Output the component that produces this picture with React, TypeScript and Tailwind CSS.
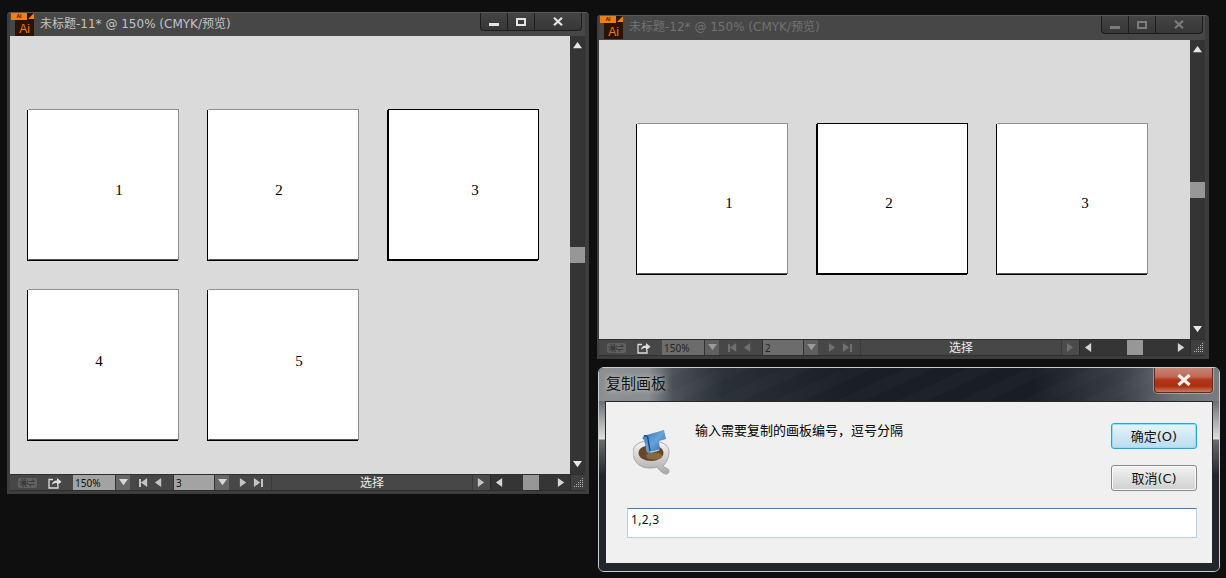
const uiFont = "font-['DejaVu_Sans','Noto_Sans_CJK_SC',sans-serif]";

function Tri({ dir, className }: { dir: "up" | "down" | "left" | "right"; className?: string }) {
  const pts = {
    up: "0,8 5,1 10,8",
    down: "0,1 10,1 5,8",
    left: "8,0 8,10 1,5",
    right: "1,0 1,10 8,5",
  }[dir];
  return (
    <svg viewBox="0 0 10 10" className={`h-[9px] w-[9px] shrink-0 ${className ?? ""}`}>
      <polygon points={pts} fill="currentColor" />
    </svg>
  );
}

function AiIcon() {
  return (
    <div className="relative h-[23px] w-[19px] shrink-0 bg-[#2b1300] font-['Liberation_Sans',sans-serif]">
      <div className="absolute -left-1 top-0 flex h-[7px] w-4 items-center justify-center bg-[#f47e0e] text-[5px] font-bold leading-none text-[#3a1a00]">
        AI
      </div>
      <div className="absolute right-0 top-0 h-0 w-0 border-b-[6px] border-l-[6px] border-b-[#f47e0e] border-l-transparent" />
      <div className="absolute inset-x-0 bottom-[1px] text-center text-[12px] font-medium leading-none text-[#f47e0e]">
        Ai
      </div>
    </div>
  );
}

function WinButtons({ active }: { active: boolean }) {
  const ink = active ? "text-[#e4e4e4]" : "text-[#7c7c7c]";
  return (
    <div className={`flex h-[18px] overflow-hidden rounded-b-[4px] border border-t-0 border-[#1d1d1d] bg-gradient-to-b from-[#444444] to-[#373737] ${ink}`}>
      <div className="flex w-[27px] items-end justify-center border-r border-[#1d1d1d] pb-[4px]">
        <div className="h-[3px] w-[10px] bg-current" />
      </div>
      <div className="flex w-[27px] items-center justify-center border-r border-[#1d1d1d]">
        <div className="h-[8px] w-[10px] border-2 border-current" />
      </div>
      <div className="flex w-[46px] items-center justify-center">
        <svg viewBox="0 0 10 9" className="h-[9px] w-[10px]">
          <path d="M1 0.8 9 8.2M9 0.8 1 8.2" stroke="currentColor" strokeWidth="2.2" />
        </svg>
      </div>
    </div>
  );
}

function Board({ label, heavy, className }: { label: string; heavy?: boolean; className: string }) {
  return (
    <div
      className={`flex h-[151px] w-[151px] items-center justify-center border bg-white font-['Liberation_Serif',serif] text-[15px] text-black shadow-[-1px_1px_0_#000] ${
        heavy ? "border-black" : "border-t-[#8f8f8f] border-r-[#8f8f8f] border-b-[#555] border-l-white"
      } ${className}`}
    >
      {label}
    </div>
  );
}

function StatusBar({ page, active }: { page: string; active: boolean }) {
  const fieldBg = active ? "bg-[#a3a3a3] text-[#111]" : "bg-[#6c6c6c] text-[#262626]";
  const ddBg = active ? "bg-[#666666] text-[#d8d8d8]" : "bg-[#5f5f5f] text-[#9a9a9a]";
  const nav = active ? "text-[#c4c4c4]" : "text-[#6f6f6f]";
  return (
    <div className="flex h-[17px] shrink-0 items-stretch border-y border-[#2e2e2e] bg-[#474747] font-['Noto_Sans','Noto_Sans_CJK_SC',sans-serif] text-[10px] leading-none">
      <div className="flex w-[262px] items-center border-r border-[#3a3a3a] pl-[8px]">
        <svg viewBox="0 0 19 10" className="h-[10px] w-[19px] shrink-0">
          <rect width="19" height="10" rx="2" fill="#606060" />
          <circle cx="6" cy="5" r="2.6" fill="#3c3c3c" />
          <circle cx="6" cy="5" r="3.700" fill="none" stroke="#3c3c3c" strokeWidth="1.4" strokeDasharray="1.500 1.400" />
          <path d="M11 3.500h5l-1.500-2M16.500 6.500h-5l1.500 2" stroke="#3c3c3c" strokeWidth="1.200" fill="none" />
        </svg>
        <svg viewBox="0 0 14 12" className="ml-[11px] h-[12px] w-[14px] shrink-0">
          <path d="M5 2.5H1V11h9V8" stroke="#dcdcdc" strokeWidth="1.3" fill="none" />
          <path d="M4 8c0-3 2-4.500 5-4.500V1l4.500 3.800L9 8.500V6C7 6 5 6.500 4 8z" fill="#dcdcdc" />
        </svg>
        <div className={`ml-[11px] flex h-[15px] w-[42px] shrink-0 items-center pl-[2px] ${fieldBg}`}>150%</div>
        <div className={`flex h-[15px] w-[15px] shrink-0 items-center justify-center border-l border-[#333] ${ddBg}`}>
          <Tri dir="down" />
        </div>
        <div className={`ml-[9px] flex w-[24px] shrink-0 items-center justify-between ${nav}`}>
          <div className="flex items-center">
            <div className="h-[8px] w-[2px] bg-current" />
            <Tri dir="left" className="-ml-px" />
          </div>
          <Tri dir="left" />
        </div>
        <div className={`ml-[10px] flex h-[15px] w-[41px] shrink-0 items-center border-l border-[#333] pl-[2px] ${fieldBg}`}>{page}</div>
        <div className={`flex h-[15px] w-[15px] shrink-0 items-center justify-center border-l border-[#333] ${ddBg}`}>
          <Tri dir="down" />
        </div>
        <div className={`ml-[10px] flex w-[24px] shrink-0 items-center justify-between ${nav}`}>
          <Tri dir="right" />
          <div className="flex items-center">
            <Tri dir="right" className="-mr-px" />
            <div className="h-[8px] w-[2px] bg-current" />
          </div>
        </div>
      </div>
      <div className="flex w-[200px] items-center justify-center pt-px text-[12px] text-[#ececec]">选择</div>
      <div className={`flex w-[18px] items-center justify-center border-l border-[#3a3a3a] bg-[#4b4b4b] ${nav}`}>
        <Tri dir="right" />
      </div>
      <div className="flex flex-1 items-center justify-between border-l border-[#2a2a2a] bg-[#353535] px-[4px] text-[#d6d6d6]">
        <Tri dir="left" />
        <div className="h-[15px] w-[16px] bg-[#979797]" />
        <Tri dir="right" />
      </div>
      <div className="w-[15px] shrink-0 border-l border-[#2a2a2a] bg-[#3f3f3f] p-[2px]">
        <svg viewBox="0 0 11 11" className="h-[11px] w-[11px]">
          {[0, 1, 2, 3, 4].map((row) =>
            [0, 1, 2, 3, 4].filter((col) => col + row >= 4).map((col) => (
              <rect key={`${row}-${col}`} x={col * 2 + 1} y={row * 2 + 1} width="1" height="1" fill="#b4b4b4" />
            ))
          )}
        </svg>
      </div>
    </div>
  );
}

function VScroll() {
  return (
    <div className="flex w-[15px] shrink-0 flex-col items-center justify-between bg-[#343434] py-[5px] text-[#e6e6e6]">
      <Tri dir="up" />
      <div className="h-4 w-[15px] bg-[#979797]" />
      <Tri dir="down" />
    </div>
  );
}

function DocWindow({
  title,
  page,
  active,
  className,
  titleClass,
  buttonsClass,
  children,
}: {
  title: string;
  page: string;
  active: boolean;
  className: string;
  titleClass: string;
  buttonsClass: string;
  children: React.ReactNode;
}) {
  return (
    <div className={`absolute flex flex-col rounded-t-[4px] border-t border-[#5a5a5a] bg-[#3d3d3d] pb-[3px] pr-1 ${className}`}>
      <div className="flex min-h-0 flex-1 flex-col">
        <div className={`flex shrink-0 items-start bg-[#474747] ${titleClass}`}>
          <div className="ml-[5px]">
            <AiIcon />
          </div>
          <div className={`ml-[6px] whitespace-pre ${uiFont} text-[12px] leading-[23px] ${active ? "text-[#c3c3c3]" : "text-[#727272]"}`}>{title}</div>
          <div className={`ml-auto ${buttonsClass}`}>
            <WinButtons active={active} />
          </div>
        </div>
        <div className="flex min-h-0 flex-1">
          <div className="min-w-0 flex-1 bg-[#dadada]">{children}</div>
          <VScroll />
        </div>
        <StatusBar page={page} active={active} />
      </div>
    </div>
  );
}

function CupIcon() {
  return (
    <svg viewBox="0 0 40 45" className="h-[45px] w-[40px] shrink-0">
      <defs>
        <linearGradient id="cup" x1="0" y1="0" x2="0" y2="1">
          <stop offset="0" stopColor="#f8f8f8" />
          <stop offset="1" stopColor="#a8a8a8" />
        </linearGradient>
        <linearGradient id="roll" x1="0" y1="0" x2="1" y2="1">
          <stop offset="0" stopColor="#2f71b8" />
          <stop offset="0.5" stopColor="#69a2d8" />
          <stop offset="1" stopColor="#2a5f9c" />
        </linearGradient>
      </defs>
      <path d="M0 22c0 10 7 16 16 16 3 0 6 0 8-1 2 3 6 7 9 7 3 0 4-3 2-5-2-1-4-2-5-3 3-3 6-8 6-14 0-8-8-11-18-11S0 14 0 22z" fill="url(#cup)" stroke="#9a9a9a" strokeWidth="0.8" />
      <ellipse cx="18" cy="23" rx="12.500" ry="8" fill="#67462a" />
      <ellipse cx="21" cy="26" rx="8" ry="3.500" fill="#8a6840" />
      <path d="M10 6 31 0l2 9-7 2 1 9-10 3c-3 1-4-2-4-5l-2-8c-2-1-2-3 0-4z" fill="url(#roll)" />
      <path d="M11 6c3-1 4 1 4 3l2 12" stroke="#174a82" strokeWidth="1.400" fill="none" />
      <path d="M17 22c3 0 6-1 9-2" stroke="#b6d2ec" strokeWidth="1.200" fill="none" />
    </svg>
  );
}

function DialogButton({ label, focused }: { label: string; focused?: boolean }) {
  return (
    <div
      className={`flex h-[26px] w-[86px] items-center justify-center rounded-[3px] border text-[13px] leading-none text-[#111] ${
        focused
          ? "border-[#1fa8e0] bg-gradient-to-b from-[#e6f4fb] to-[#bcdcec] shadow-[inset_0_0_0_1px_#8fe0f8]"
          : "border-[#8a8a8a] bg-gradient-to-b from-[#f3f3f3] to-[#cfcfcf] shadow-[inset_0_0_0_1px_#fafafa]"
      }`}
    >
      {label}
    </div>
  );
}

function CopyDialog() {
  return (
    <div className={`absolute left-[598px] top-[367px] flex h-[205px] w-[622px] flex-col overflow-hidden rounded-[6px] border border-[#c9cdd0] bg-[#1a2026] ${uiFont}`}>
      <div className="relative flex h-[33px] shrink-0 items-center bg-[linear-gradient(90deg,#8b8e90_0%,#8b8e90_8%,#4a5056_12%,#2a3038_20%,#1a1f26_40%,#191e24_70%,#3a3f45_84%,#6f7478_94%,#777b7e_100%)] pl-[7px]">
        <div className="absolute inset-0 bg-[repeating-linear-gradient(155deg,rgba(255,255,255,0.015)_0px,rgba(255,255,255,0.015)_12px,rgba(255,255,255,0)_12px,rgba(255,255,255,0)_26px)]" />
        <div className="relative text-[15px] leading-none text-[#101418] [text-shadow:0_0_6px_rgba(255,255,255,0.7)]">复制画板</div>
        <div className="absolute right-[6px] top-0 flex h-[25px] w-[59px] items-center justify-center rounded-b-[4px] border border-t-0 border-[#5b2a20] bg-[linear-gradient(180deg,#c98374_0%,#c06a56_35%,#b8341a_50%,#a8300f_75%,#cd7a62_100%)] shadow-[0_0_0_1px_rgba(255,255,255,0.35)]">
          <svg viewBox="0 0 16 12" className="h-[12px] w-[16px]">
            <path d="M2.500 1 13.500 11M13.500 1 2.500 11" stroke="#f1f1f1" strokeWidth="3.200" />
          </svg>
        </div>
      </div>
      <div className="flex min-h-0 flex-1 bg-[linear-gradient(180deg,#6a6f72_0px,#e0e0e0_38px,#686c70_39px,#20262c_75px)] px-[6px] pb-[7px]">
        <div className="flex h-full flex-1 flex-col border border-[#25282b] bg-[#f0f0f0] pl-[21px] pr-[15px] pt-[21px]">
          <div className="flex h-[85px] shrink-0 items-start">
            <div className="ml-[6px] mt-[7px]">
              <CupIcon />
            </div>
            <div className="ml-[22px] text-[13px] leading-[16px] text-black">输入需要复制的画板编号，逗号分隔</div>
            <div className="ml-auto flex flex-col gap-[16px]">
              <DialogButton label="确定(O)" focused />
              <DialogButton label="取消(C)" />
            </div>
          </div>
          <div className="h-[30px] shrink-0 border border-[#b8d3e8] border-t-[#3d80b8] bg-white pl-[3px] pt-[3px] font-['Noto_Sans',sans-serif] text-[12px] leading-[16px] tracking-[0.3px] text-[#111]">
            1,2,3
          </div>
        </div>
      </div>
    </div>
  );
}

export default function App() {
  return (
    <div className="relative h-[578px] w-[1226px] overflow-hidden bg-[#0f0f0f]">
      <DocWindow
        title="未标题-11* @ 150% (CMYK/预览)"
        page="3"
        active
        className="left-[7px] top-[12px] h-[482px] w-[582px] pl-[3px]"
        titleClass="h-[23px]"
        buttonsClass="mr-[3px]"
      >
        <div className="grid grid-cols-[151px_151px_151px] gap-[29px] pl-[18px] pt-[73px]">
          <Board label="1" className="pl-[31px] pt-[11px]" />
          <Board label="2" className="pr-[9px] pt-[11px]" />
          <Board label="3" heavy className="pl-[23px] pt-[11px]" />
          <Board label="4" className="pr-[9px] pb-[7px]" />
          <Board label="5" className="pl-[31px] pb-[7px]" />
        </div>
      </DocWindow>
      <DocWindow
        title="未标题-12* @ 150% (CMYK/预览)"
        page="2"
        active={false}
        className="left-[597px] top-[15px] h-[344px] w-[612px] pl-[2px]"
        titleClass="h-[24px]"
        buttonsClass="mr-[2px]"
      >
        <div className="grid grid-cols-[151px_151px_151px] gap-x-[29px] pl-[38px] pt-[83px]">
          <Board label="1" className="pl-[33px] pt-[10px]" />
          <Board label="2" heavy className="pr-[7px] pt-[10px]" />
          <Board label="3" className="pl-[25px] pt-[10px]" />
        </div>
      </DocWindow>
      <CopyDialog />
    </div>
  );
}
